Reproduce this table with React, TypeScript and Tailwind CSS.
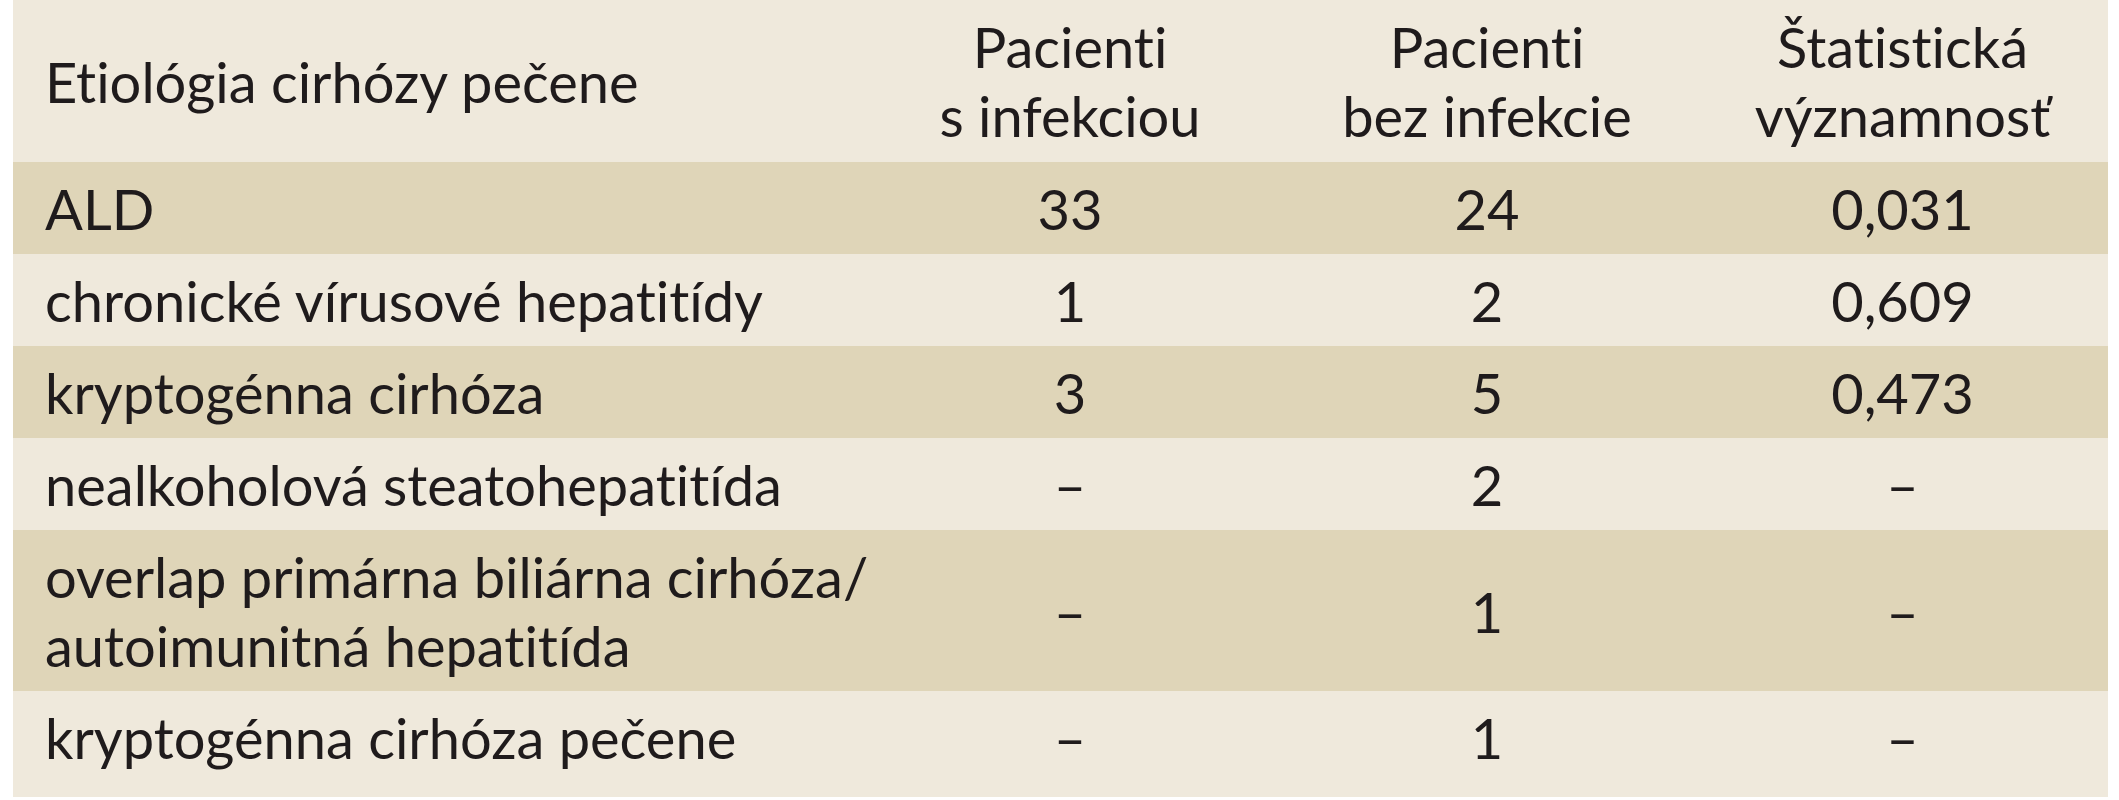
const rows: { label: string[]; a: string; b: string; p: string }[] = [
  { label: ["ALD"], a: "33", b: "24", p: "0,031" },
  { label: ["chronické vírusové hepatitídy"], a: "1", b: "2", p: "0,609" },
  { label: ["kryptogénna cirhóza"], a: "3", b: "5", p: "0,473" },
  { label: ["nealkoholová steatohepatitída"], a: "–", b: "2", p: "–" },
  { label: ["overlap primárna biliárna cirhóza/", "autoimunitná hepatitída"], a: "–", b: "1", p: "–" },
  { label: ["kryptogénna cirhóza pečene"], a: "–", b: "1", p: "–" },
];

export default function App() {
  return (
    <div className="w-[2119px] h-[800px] bg-white pl-[13px] pr-[11px] overflow-hidden">
      <div
        className="text-[56px] leading-[69px] text-[#1f1b1c] [font-variant-ligatures:none]"
        style={{ fontFamily: "Lato, 'Liberation Sans', sans-serif" }}
      >
        {/* header */}
        <div className="grid grid-cols-[850px_414px_420px_411px] h-[162px] bg-[#efe9dc] items-center">
          <div className="pl-[32px] whitespace-nowrap">Etiológia cirhózy pečene</div>
          <div className="text-center">
            <div>Pacienti</div>
            <div>s infekciou</div>
          </div>
          <div className="text-center">
            <div>Pacienti</div>
            <div>bez infekcie</div>
          </div>
          <div className="text-center">
            <div>Štatistická</div>
            <div>významnosť</div>
          </div>
        </div>

        {rows.map((r, i) => (
          <div
            key={i}
            className={
              "grid grid-cols-[850px_414px_420px_411px] items-center pt-[12px] " +
              (i % 2 === 0 ? "bg-[#dfd5b8]" : "bg-[#efe9dc]") +
              (i === rows.length - 1 ? " pb-[25px]" : " pb-[11px]")
            }
          >
            <div className="pl-[32px] whitespace-nowrap">
              {r.label.map((l, j) => (
                <div key={j}>{l}</div>
              ))}
            </div>
            <div className="text-center">{r.a}</div>
            <div className="text-center">{r.b}</div>
            <div className="text-center">{r.p}</div>
          </div>
        ))}
      </div>
    </div>
  );
}
